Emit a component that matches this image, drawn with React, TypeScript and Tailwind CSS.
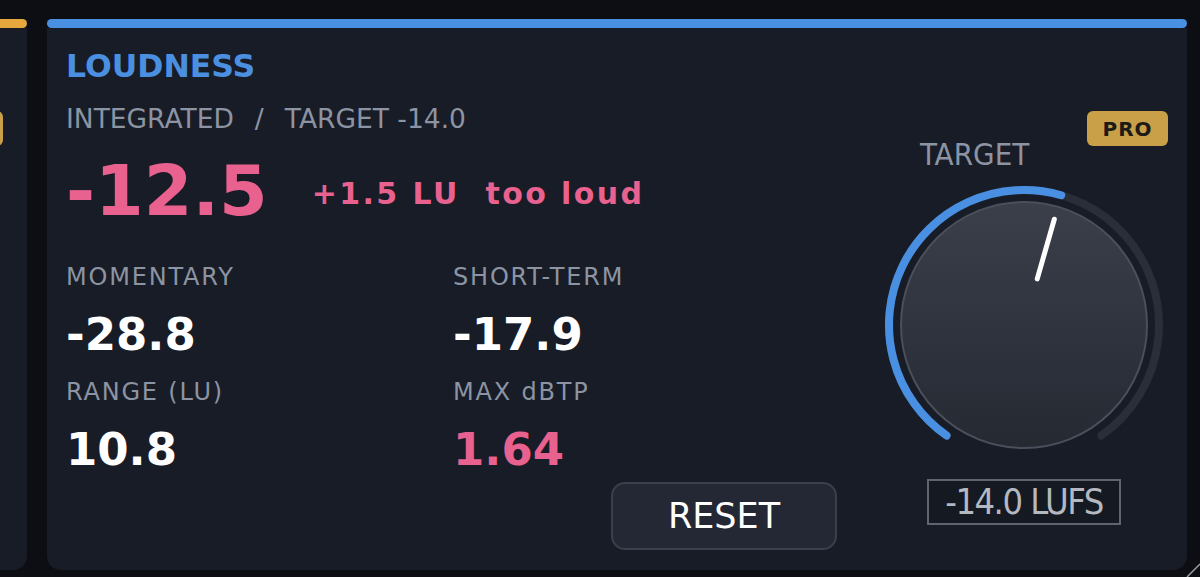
import React from "react";

// Knob geometry, in svg units. Angles are measured clockwise from 12 o'clock.
const CX = 144;
const CY = 145;
const ARC_R = 135;
const KNOB_R = 123;
const MIN_ANGLE = -145;
const MAX_ANGLE = 145;

const polar = (r: number, deg: number) => {
  const rad = (deg * Math.PI) / 180;
  return { x: CX + r * Math.sin(rad), y: CY - r * Math.cos(rad) };
};

const arcPath = (r: number, from: number, to: number) => {
  const a = polar(r, from);
  const b = polar(r, to);
  const large = to - from > 180 ? 1 : 0;
  return `M ${a.x} ${a.y} A ${r} ${r} 0 ${large} 1 ${b.x} ${b.y}`;
};

interface Metric {
  label: string;
  value: string;
  warn?: boolean;
}

const metrics: Metric[] = [
  { label: "MOMENTARY", value: "-28.8" },
  { label: "SHORT-TERM", value: "-17.9" },
  { label: "RANGE (LU)", value: "10.8" },
  { label: "MAX dBTP", value: "1.64", warn: true },
];

const TargetKnob: React.FC<{ angle: number }> = ({ angle }) => {
  const tipOuter = polar(110, angle);
  const tipInner = polar(48, angle);
  return (
    <svg width="288" height="270" viewBox="0 0 288 270">
      <defs>
        <linearGradient id="knobFill" x1="0" y1="0" x2="0" y2="1">
          <stop offset="0%" stopColor="#3b3f4a" />
          <stop offset="100%" stopColor="#252932" />
        </linearGradient>
      </defs>
      <path d={arcPath(ARC_R, MIN_ANGLE, MAX_ANGLE)} fill="none" stroke="#2a2e38" strokeWidth="8" strokeLinecap="round" />
      <path d={arcPath(ARC_R, MIN_ANGLE, angle)} fill="none" stroke="#4a90e2" strokeWidth="8" strokeLinecap="round" />
      <circle cx={CX} cy={CY} r={KNOB_R} fill="url(#knobFill)" stroke="#4a4f5b" strokeWidth="2" />
      <line
        x1={tipInner.x}
        y1={tipInner.y}
        x2={tipOuter.x}
        y2={tipOuter.y}
        stroke="#ffffff"
        strokeWidth="5"
        strokeLinecap="round"
      />
    </svg>
  );
};

const App: React.FC = () => {
  return (
    <div className="relative flex h-[577px] w-[1200px] gap-[20px] overflow-hidden bg-[#0c0e14] pt-[19px] pb-[7px] font-['DejaVu_Sans',sans-serif]">
      {/* neighbouring module, mostly scrolled off to the left */}
      <div className="flex w-[27px] shrink-0 flex-col">
        <div className="h-[9px] rounded-r-full bg-[#e6a83c]" />
        <div className="flex-1 rounded-br-[14px] bg-[#181c26] pt-[83px]">
          <div className="ml-[-78px] h-[35px] w-[81px] rounded-md bg-[#c9a048]" />
        </div>
      </div>

      {/* loudness module */}
      <div className="flex w-[1140px] shrink-0 flex-col">
        <div className="h-[9px] rounded-full bg-[#4a90e2]" />
        <div className="flex flex-1 rounded-b-[14px] bg-[#181c26] px-[19px]">
          <div className="flex w-[771px] flex-col pt-[23px]">
            <h2 className="text-[31.5px] font-bold leading-none text-[#4b8fe0]">LOUDNESS</h2>
            <p className="mt-[23px] text-[26.5px] leading-none text-[#8c94a3]">
              <span>INTEGRATED</span>
              <span className="mx-[21px]">/</span>
              <span>TARGET -14.0</span>
            </p>

            <div className="mt-[24px] flex items-center">
              <span className="text-[70px] font-bold leading-none text-[#e8618f]">-12.5</span>
              <span className="ml-[44px] pt-[5px] text-[30px] font-bold leading-none tracking-[2.4px] text-[#e8618f] whitespace-pre">
                +1.5 LU  too loud
              </span>
            </div>

            <div className="mt-[39px] grid grid-cols-[387px_1fr] gap-y-[23px]">
              {metrics.map((m) => (
                <div key={m.label} className="flex flex-col">
                  <span className="text-[24px] leading-none tracking-[1.8px] text-[#8c94a3]">{m.label}</span>
                  <span
                    className={`mt-[23px] text-[45px] font-bold leading-none ${
                      m.warn ? "text-[#e8618f]" : "text-white"
                    }`}
                  >
                    {m.value}
                  </span>
                </div>
              ))}
            </div>

            <div className="mt-[10px] flex justify-end">
              <button className="flex h-[68px] w-[226px] items-center justify-center rounded-[14px] border-2 border-[#3a3f4b] bg-[#232834] text-[35px] leading-none text-white">
                RESET
              </button>
            </div>
          </div>

          <div className="ml-auto flex w-[288px] flex-col pt-[83px]">
            <div className="flex items-start justify-between pl-[40px]">
              <span className="mt-[28px] font-['DejaVu_Sans_Condensed','DejaVu_Sans',sans-serif] text-[31px] leading-none text-[#8c94a3]">
                TARGET
              </span>
              <span className="flex h-[35px] w-[81px] items-center justify-center rounded-md bg-[#c9a048] text-[20px] font-bold leading-none tracking-[1px] text-[#1c1b18]">
                PRO
              </span>
            </div>
            <div className="mt-[10px]">
              <TargetKnob angle={16} />
            </div>
            <div className="mt-[29px] flex h-[46px] w-[194px] items-center justify-center self-center border-2 border-[#5f6470] bg-[#151922] font-['DejaVu_Sans_Condensed','DejaVu_Sans',sans-serif] text-[36px] leading-none tracking-[-1.5px] text-[#b4b8c0]">
              -14.0 LUFS
            </div>
          </div>
        </div>
      </div>

      {/* window resize grip */}
      <svg className="absolute right-0 bottom-0" width="14" height="14" viewBox="0 0 14 14">
        <line x1="1" y1="14" x2="14" y2="1" stroke="#9aa0aa" strokeWidth="1.5" />
      </svg>
    </div>
  );
};

export default App;
